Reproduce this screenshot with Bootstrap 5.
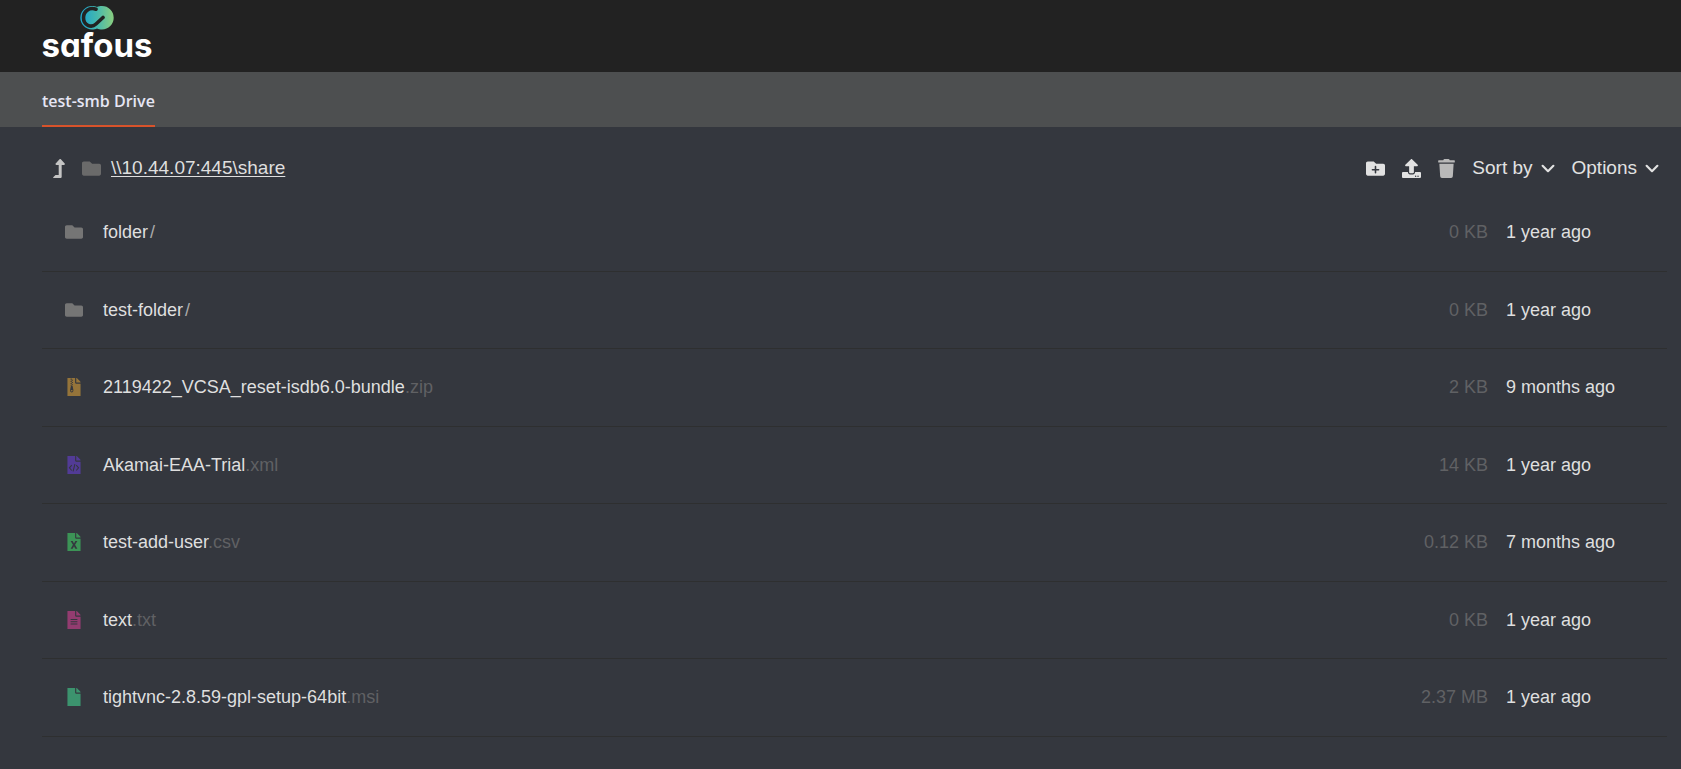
<!DOCTYPE html>
<html lang="en">
<head>
<meta charset="utf-8">
<meta name="viewport" content="width=device-width, initial-scale=1">
<title>Safous – test-smb Drive</title>
<link href="https://cdn.jsdelivr.net/npm/bootstrap@5.3.0/dist/css/bootstrap.min.css" rel="stylesheet">
<style>
  body { background: #34373e; color: #dfdfdf; font-family: "Liberation Sans", Arial, sans-serif; font-size: 18px; }
  a, button { color: inherit; }
  .topbar { background: #222; height: 72px; padding: 6px 42px; }
  .brand { color: #fff; text-decoration: none; width: 110px; }
  .brand-name { font: 700 33px/31px Inter, sans-serif; font-feature-settings: "cv11"; }
  .tabbar { background: #4d4f50; padding: 0 42px; height: 55px; }
  .drive-tab { border-bottom: 2px solid #d8532b; color: #e6e6f4; font: 600 16px/20px "Open Sans", sans-serif; text-decoration: none; padding: 4px 0 0; }
  .toolbar { padding: 26px 22px 11px 53px; font-size: 19px; }
  .toolbar .btn { --bs-btn-color: #e2e2e2; --bs-btn-hover-color: #fff; --bs-btn-padding-x: 0; --bs-btn-padding-y: 0; --bs-btn-font-size: 19px; --bs-btn-border-width: 0; line-height: 30px; }
  .tools { gap: 17px; }
  .up { margin-right: 17px; }
  .path-link { line-height: 30px; margin-left: 10px; text-underline-offset: 2px; }
  .listing { padding: 0 14px 0 42px; }
  .listing td { border-bottom: 1px solid #2e2f30; padding: 27px 0; vertical-align: middle; }
  .listing .col-icon { width: 61px; padding-left: 23px; }
  .listing .col-size { width: 120px; text-align: right; color: #606164; }
  .listing .col-date { width: 179px; padding-left: 18px; }
  .listing a { text-decoration: none; }
  .ext { color: #606164; }
  .slash { color: #aaa; padding-left: 2px; }
  svg { display: block; fill: currentColor; flex: none; }
  .cut { fill: #34373e; }
  .cut-line { fill: none; stroke: #34373e; }
</style>
</head>
<body>
<svg width="0" height="0" class="position-absolute" aria-hidden="true">
  <symbol id="i-folder" viewBox="0 0 512 512"><path d="M464 128H272l-64-64H48C21.5 64 0 85.500 0 112v288c0 26.500 21.500 48 48 48h416c26.500 0 48-21.500 48-48V176c0-26.500-21.500-48-48-48z"/></symbol>
  <symbol id="i-file" viewBox="0 0 384 512"><path d="M224 136V0H0v512h384V160H248c-13.200 0-24-10.800-24-24zM384 122v6H256V0h6c6 0 12 2 17 7l98 98c4 4 7 11 7 17z"/></symbol>
  <symbol id="i-chevron" viewBox="0 0 13 8"><path d="M1.500 1.500l5 5 5-5" fill="none" stroke="currentColor" stroke-width="2" stroke-linecap="round" stroke-linejoin="round"/></symbol>
</svg>

<header class="topbar">
  <a href="#" class="brand d-flex flex-column align-items-center">
    <svg width="34" height="24" viewBox="0 0 34 24" aria-hidden="true">
      <defs><linearGradient id="logo" x1="0" x2="1"><stop offset=".1" stop-color="#22a5c8"/><stop offset=".5" stop-color="#45b8ae"/><stop offset=".95" stop-color="#84cc83"/></linearGradient></defs>
      <path fill="url(#logo)" d="M12 0C14 0 15.500 .3 17 1C18.500 .3 20 0 22 0A11.700 11.700 0 0 1 22 23.400C20 23.400 18.500 23 17 22.400C15.500 23 14 23.400 12 23.400A11.700 11.700 0 0 1 12 0z"/>
      <path d="M16 3.200C9 .8 3.500 5.500 3.500 11.700C3.500 19 11 22.500 16 18L23 11.500" fill="none" stroke="#222" stroke-width="3.600" stroke-linecap="round"/>
    </svg>
    <span class="brand-name">safous</span>
  </a>
</header>

<nav class="tabbar d-flex" aria-label="Drives">
  <a href="#" class="drive-tab d-flex align-items-center" aria-current="page">test-smb Drive</a>
</nav>

<main>
  <div class="toolbar d-flex align-items-center justify-content-between">
    <div class="d-flex align-items-center">
      <button class="btn up" type="button" aria-label="Up one level"><svg width="12" height="19" viewBox="0 0 320 512" color="#c4c4c4"><path d="M313.500 119.700L209.600 7.700c-9.500-10.200-25.700-10.200-35.200 0L70.400 119.700C56.200 135 67 160 88 160h64v272H68c-3.200 0-6.200 1.300-8.500 3.500l-56 56C-4 499 1.300 512 12 512h196c13.300 0 24-10.700 24-24V160h64c20.900 0 31.800-25 17.500-40.300z"/></svg></button>
      <svg width="19" height="19" color="#6a6a6a" aria-hidden="true"><use href="#i-folder"/></svg>
      <a href="#" class="path-link">\\10.44.07:445\share</a>
    </div>
    <div class="tools d-flex align-items-center">
      <button class="btn" type="button" aria-label="New folder"><svg width="19" height="19" viewBox="0 0 512 512"><use href="#i-folder"/><path class="cut-line" stroke-width="42" stroke-linecap="round" d="M256 205v166M173 288h166"/></svg></button>
      <button class="btn" type="button" aria-label="Upload"><svg width="19" height="19" viewBox="0 0 512 512"><path d="M296 384h-80c-13.300 0-24-10.700-24-24V192h-87.700c-17.800 0-26.700-21.500-14.100-34.100L242.300 5.700c7.500-7.500 19.800-7.500 27.300 0l152.200 152.200c12.600 12.600 3.700 34.100-14.100 34.100H320v168c0 13.300-10.700 24-24 24zm216-8v112c0 13.300-10.700 24-24 24H24c-13.300 0-24-10.700-24-24V376c0-13.300 10.700-24 24-24h136v8c0 30.900 25.100 56 56 56h80c30.900 0 56-25.100 56-56v-8h136c13.300 0 24 10.700 24 24zm-124 88c0-11-9-20-20-20s-20 9-20 20 9 20 20 20 20-9 20-20zm64 0c0-11-9-20-20-20s-20 9-20 20 9 20 20 20 20-9 20-20z"/></svg></button>
      <button class="btn" type="button" aria-label="Delete"><svg width="17" height="19" viewBox="0 0 448 512" color="#b9b9b9"><path d="M432 32H312l-9.400-18.700A24 24 0 0 0 281.100 0H166.800a23.700 23.700 0 0 0-21.400 13.300L136 32H16A16 16 0 0 0 0 48v32a16 16 0 0 0 16 16h416a16 16 0 0 0 16-16V48a16 16 0 0 0-16-16zM53.200 467a48 48 0 0 0 47.900 45h245.800a48 48 0 0 0 47.900-45L416 128H32z"/></svg></button>
      <button class="btn d-flex align-items-center" type="button">Sort by<svg class="ms-2" width="14" height="9"><use href="#i-chevron"/></svg></button>
      <button class="btn d-flex align-items-center" type="button">Options<svg class="ms-2" width="14" height="9"><use href="#i-chevron"/></svg></button>
    </div>
  </div>

  <div class="listing">
    <table class="w-100 lh-sm">
      <tbody>
        <tr>
          <td class="col-icon"><svg width="18" height="18" color="#757575"><use href="#i-folder"/></svg></td>
          <td><a href="#">folder<span class="slash">/</span></a></td>
          <td class="col-size">0 KB</td>
          <td class="col-date">1 year ago</td>
        </tr>
        <tr>
          <td class="col-icon"><svg width="18" height="18" color="#757575"><use href="#i-folder"/></svg></td>
          <td><a href="#">test-folder<span class="slash">/</span></a></td>
          <td class="col-size">0 KB</td>
          <td class="col-date">1 year ago</td>
        </tr>
        <tr>
          <td class="col-icon"><svg width="18" height="18" viewBox="-64 0 512 512" color="#95743a"><use href="#i-file" width="384" height="512"/><path class="cut-line" stroke-width="32" stroke-dasharray="32" d="M112 16v208M144 48v176"/><path class="cut" d="M104 224h48l22 118c6 44-20 72-46 72s-54-28-46-72z"/><ellipse cx="128" cy="364" rx="28" ry="20"/></svg></td>
          <td><a href="#">2119422_VCSA_reset-isdb6.0-bundle<span class="ext">.zip</span></a></td>
          <td class="col-size">2 KB</td>
          <td class="col-date">9 months ago</td>
        </tr>
        <tr>
          <td class="col-icon"><svg width="18" height="18" viewBox="-64 0 512 512" color="#523b96"><use href="#i-file" width="384" height="512"/><path class="cut-line" stroke-width="30" d="M128 260l-66 76 66 76M256 260l66 76-66 76M218 232l-52 204"/></svg></td>
          <td><a href="#">Akamai-EAA-Trial<span class="ext">.xml</span></a></td>
          <td class="col-size">14 KB</td>
          <td class="col-date">1 year ago</td>
        </tr>
        <tr>
          <td class="col-icon"><svg width="18" height="18" viewBox="-64 0 512 512" color="#3c9356"><use href="#i-file" width="384" height="512"/><path class="cut" d="M96 224h58l38 72 38-72h58l-66 112 66 112h-58l-38-72-38 72H96l66-112z"/></svg></td>
          <td><a href="#">test-add-user<span class="ext">.csv</span></a></td>
          <td class="col-size">0.12 KB</td>
          <td class="col-date">7 months ago</td>
        </tr>
        <tr>
          <td class="col-icon"><svg width="18" height="18" viewBox="-64 0 512 512" color="#933c70"><use href="#i-file" width="384" height="512"/><path class="cut-line" stroke-width="30" d="M96 242h192M96 306h192M96 370h192"/></svg></td>
          <td><a href="#">text<span class="ext">.txt</span></a></td>
          <td class="col-size">0 KB</td>
          <td class="col-date">1 year ago</td>
        </tr>
        <tr>
          <td class="col-icon"><svg width="18" height="18" viewBox="-64 0 512 512" color="#3c936e"><use href="#i-file" width="384" height="512"/></svg></td>
          <td><a href="#">tightvnc-2.8.59-gpl-setup-64bit<span class="ext">.msi</span></a></td>
          <td class="col-size">2.37 MB</td>
          <td class="col-date">1 year ago</td>
        </tr>
      </tbody>
    </table>
  </div>
</main>
<script src="https://cdn.jsdelivr.net/npm/bootstrap@5.3.0/dist/js/bootstrap.bundle.min.js"></script>
</body>
</html>
